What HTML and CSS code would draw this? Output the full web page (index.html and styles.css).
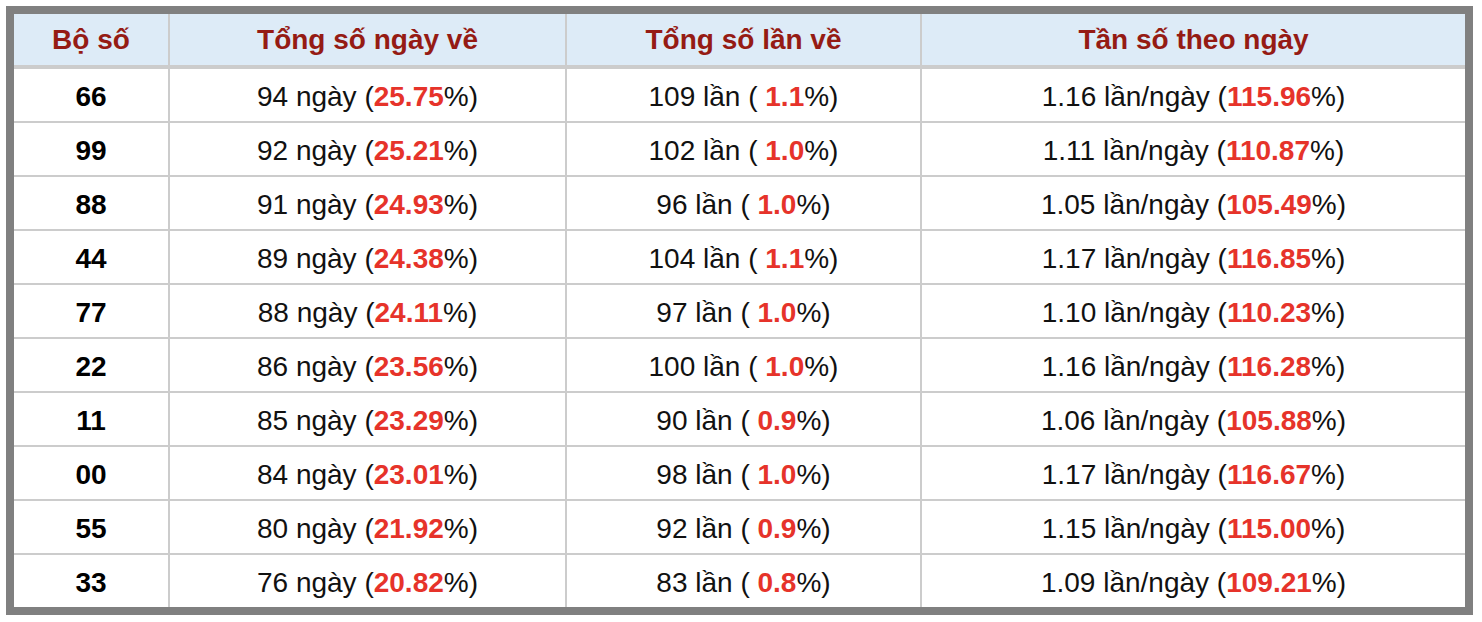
FILE: index.html
```html
<!DOCTYPE html>
<html lang="vi">
<head>
<meta charset="utf-8">
<title>Thống kê</title>
<link rel="stylesheet" href="styles.css">
</head>
<body>
<table class="stats">
  <colgroup>
    <col class="c1"><col class="c2"><col class="c3"><col class="c4">
  </colgroup>
  <thead>
    <tr><th>Bộ số</th><th>Tổng số ngày về</th><th>Tổng số lần về</th><th>Tần số theo ngày</th></tr>
  </thead>
  <tbody>
    <tr><td class="num">66</td><td>94 ngày (<b class="red">25.75</b>%)</td><td>109 lần ( <b class="red">1.1</b>%)</td><td>1.16 lần/ngày (<b class="red">115.96</b>%)</td></tr>
    <tr><td class="num">99</td><td>92 ngày (<b class="red">25.21</b>%)</td><td>102 lần ( <b class="red">1.0</b>%)</td><td>1.11 lần/ngày (<b class="red">110.87</b>%)</td></tr>
    <tr><td class="num">88</td><td>91 ngày (<b class="red">24.93</b>%)</td><td>96 lần ( <b class="red">1.0</b>%)</td><td>1.05 lần/ngày (<b class="red">105.49</b>%)</td></tr>
    <tr><td class="num">44</td><td>89 ngày (<b class="red">24.38</b>%)</td><td>104 lần ( <b class="red">1.1</b>%)</td><td>1.17 lần/ngày (<b class="red">116.85</b>%)</td></tr>
    <tr><td class="num">77</td><td>88 ngày (<b class="red">24.11</b>%)</td><td>97 lần ( <b class="red">1.0</b>%)</td><td>1.10 lần/ngày (<b class="red">110.23</b>%)</td></tr>
    <tr><td class="num">22</td><td>86 ngày (<b class="red">23.56</b>%)</td><td>100 lần ( <b class="red">1.0</b>%)</td><td>1.16 lần/ngày (<b class="red">116.28</b>%)</td></tr>
    <tr><td class="num">11</td><td>85 ngày (<b class="red">23.29</b>%)</td><td>90 lần ( <b class="red">0.9</b>%)</td><td>1.06 lần/ngày (<b class="red">105.88</b>%)</td></tr>
    <tr><td class="num">00</td><td>84 ngày (<b class="red">23.01</b>%)</td><td>98 lần ( <b class="red">1.0</b>%)</td><td>1.17 lần/ngày (<b class="red">116.67</b>%)</td></tr>
    <tr><td class="num">55</td><td>80 ngày (<b class="red">21.92</b>%)</td><td>92 lần ( <b class="red">0.9</b>%)</td><td>1.15 lần/ngày (<b class="red">115.00</b>%)</td></tr>
    <tr><td class="num">33</td><td>76 ngày (<b class="red">20.82</b>%)</td><td>83 lần ( <b class="red">0.8</b>%)</td><td>1.09 lần/ngày (<b class="red">109.21</b>%)</td></tr>
  </tbody>
</table>
</body>
</html>
```
FILE: styles.css
```css
html, body {
  margin: 0;
  padding: 0;
  background: #ffffff;
}
body {
  padding: 6px 0 0 6px;
  font-family: "Liberation Sans", Arial, Helvetica, sans-serif;
}
.stats {
  border-collapse: collapse;
  table-layout: fixed;
  width: 1467px;
  border: 8px solid #808080;
  font-size: 28px;
  line-height: 1;
  color: #111111;
}
.c1 { width: 159px; }
.c2 { width: 397px; }
.c3 { width: 355px; }
.c4 { width: 548px; }
.stats th,
.stats td {
  border: 2px solid #cccccc;
  text-align: center;
  padding: 0;
}
.stats th {
  background: #ddebf7;
  color: #951b14;
  font-weight: bold;
  height: 51px;
  border-bottom-width: 4px;
}
.stats td {
  height: 49px;
  font-weight: normal;
  padding-top: 3px;
}
.stats td.num {
  font-weight: bold;
  color: #000000;
}
.red {
  color: #e6332a;
  font-weight: bold;
}
```
